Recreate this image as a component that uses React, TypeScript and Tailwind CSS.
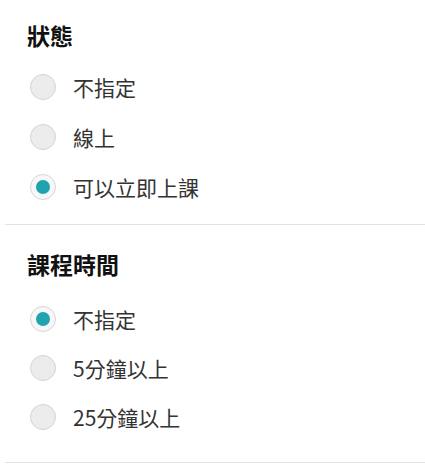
const font = { fontFamily: '"Noto Sans CJK TC", "Noto Sans", sans-serif' };

type Option = { label: string; checked?: boolean };

const Radio = ({ checked = false }: { checked?: boolean }) => (
  <span
    className={`flex h-[26px] w-[26px] flex-none items-center justify-center rounded-full border ${
      checked ? 'border-[#d6d6d6] bg-[#f7f7f7]' : 'border-[#d4d4d4] bg-[#ececec]'
    }`}
  >
    {checked && <span className="h-[14px] w-[14px] rounded-full bg-[#1fa4ae]" />}
  </span>
);

const Section = ({
  title,
  options,
  sectionClass = '',
  listClass = '',
  rowClass = ''
}: {
  title: string;
  options: Option[];
  sectionClass?: string;
  listClass?: string;
  rowClass?: string;
}) => (
  <div className={`ml-[5px] border-b border-[#e2e2e2] ${sectionClass}`}>
    <h2 className="pl-[22px] text-[23px] font-bold leading-7 text-[#111]">{title}</h2>
    <div className={`flex flex-col ${listClass}`}>
      {options.map((o) => (
        <label key={o.label} className={`flex items-center gap-[17px] pl-[25px] ${rowClass}`}>
          <Radio checked={o.checked} />
          <span className="text-[21px] leading-6 text-[#333]">{o.label}</span>
        </label>
      ))}
    </div>
  </div>
);

export default function App() {
  return (
    <div className="h-[470px] w-[425px] bg-white" style={font}>
      <Section
        title="狀態"
        sectionClass="pt-[21px] pb-[12px]"
        listClass="mt-[13px]"
        rowClass="h-[50px]"
        options={[{ label: '不指定' }, { label: '線上' }, { label: '可以立即上課', checked: true }]}
      />
      <Section
        title="課程時間"
        sectionClass="pt-[25px] pb-[21px]"
        listClass="mt-[16px]"
        rowClass="h-[49px]"
        options={[{ label: '不指定', checked: true }, { label: '5分鐘以上' }, { label: '25分鐘以上' }]}
      />
    </div>
  );
}
